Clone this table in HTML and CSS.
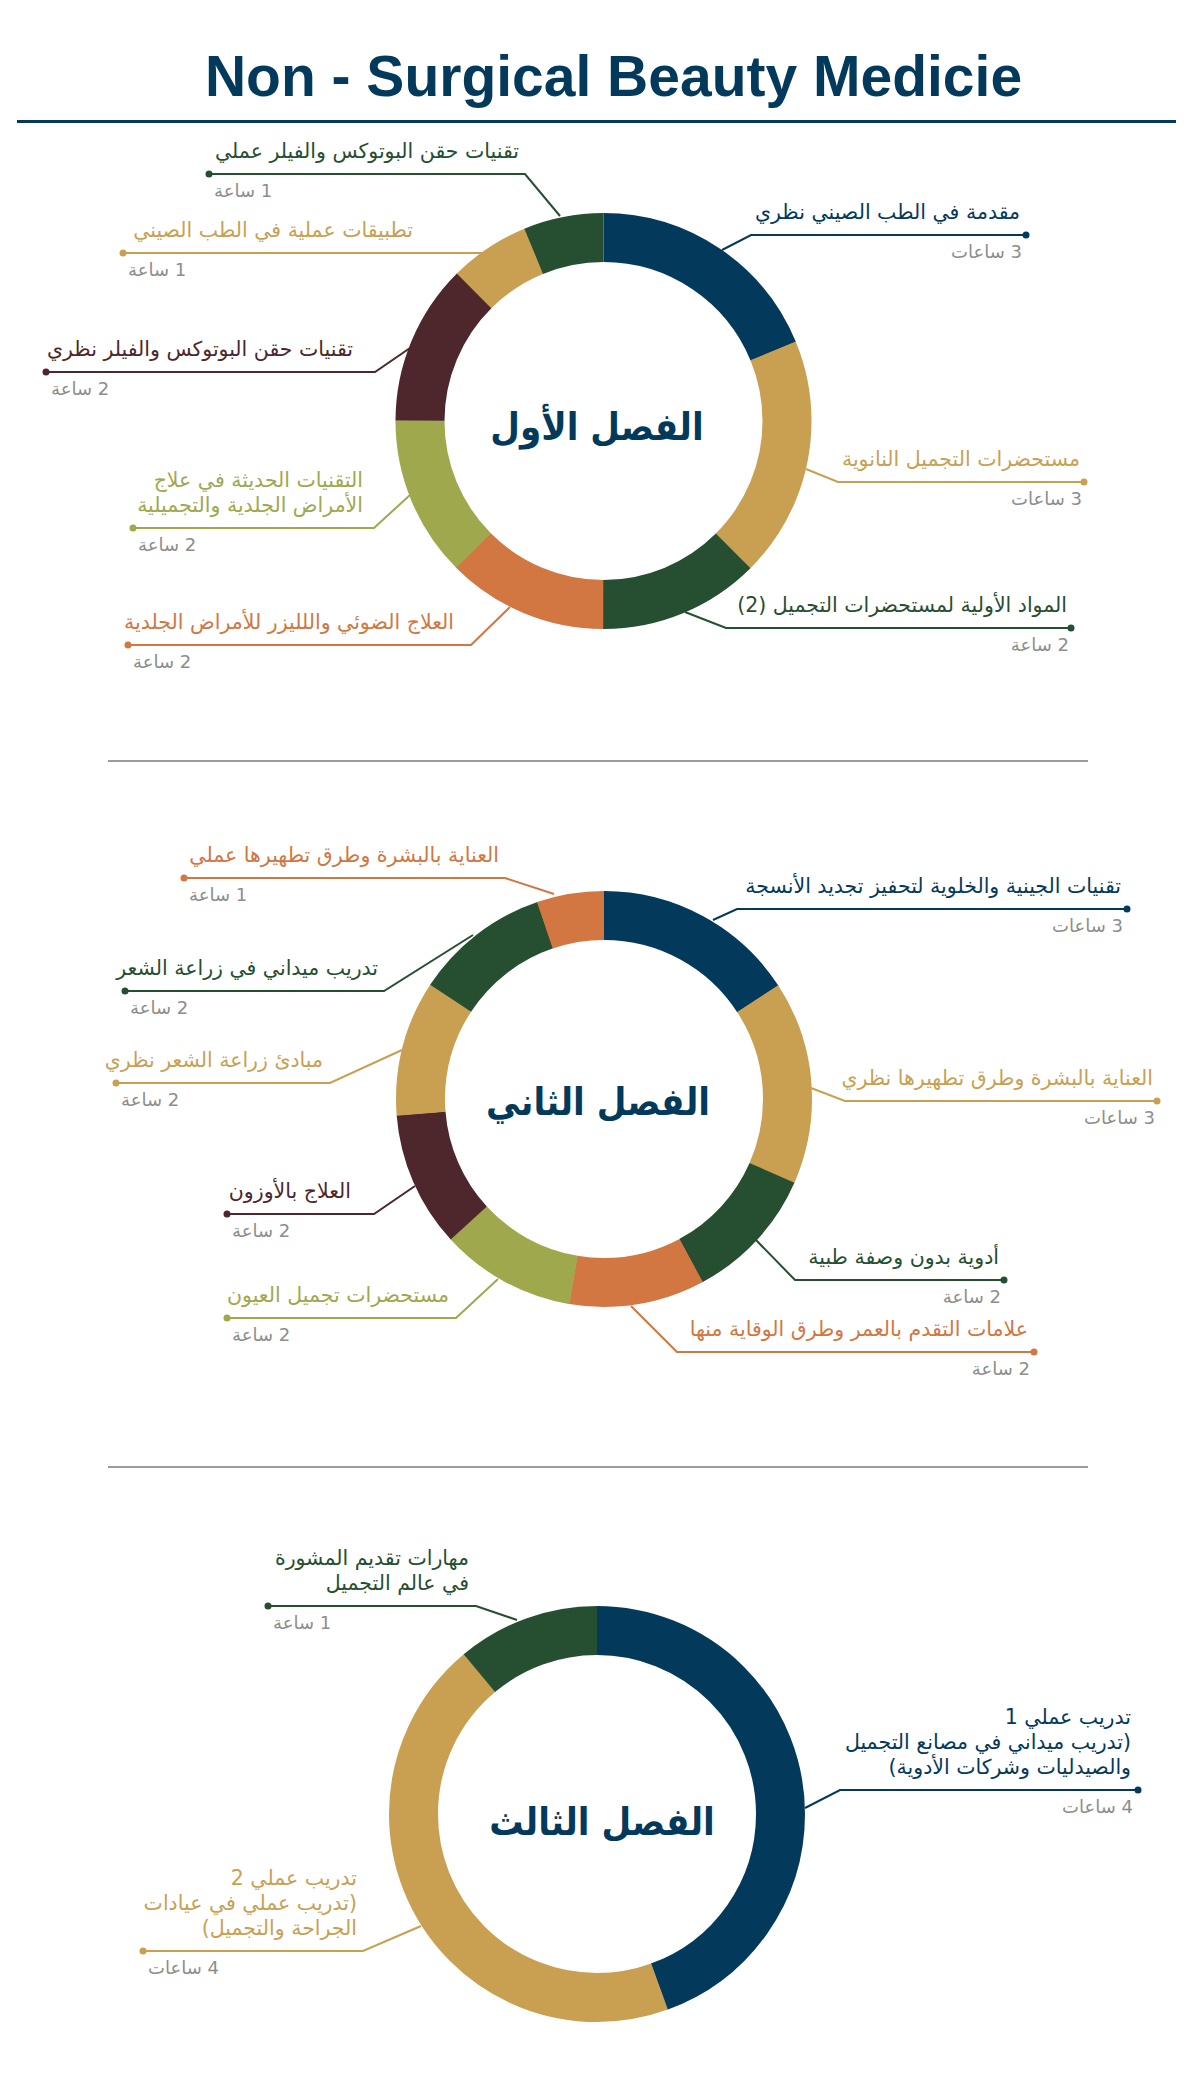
FILE: index.html
```html
<!DOCTYPE html>
<html lang="ar">
<head>
<meta charset="utf-8">
<title>Non - Surgical Beauty Medicie</title>
<link rel="stylesheet" href="styles.css">
</head>
<body>
<main class="page">
  <header class="head">
    <h1 class="title">Non - Surgical Beauty Medicie</h1>
  </header>

  <section class="chart">
    <svg class="canvas" width="1200" height="637" viewBox="0 0 1200 637">
      <g class="ring" transform="rotate(-90 603.5 298)">
        <circle cx="603.5" cy="298" r="183.5" stroke="#033a5c" stroke-dasharray="216.7 936.3" stroke-dashoffset="0"/>
        <circle cx="603.5" cy="298" r="183.5" stroke="#c9a051" stroke-dasharray="216.7 936.3" stroke-dashoffset="-216.18"/>
        <circle cx="603.5" cy="298" r="183.5" stroke="#264e30" stroke-dasharray="144.6 1008.4" stroke-dashoffset="-432.36"/>
        <circle cx="603.5" cy="298" r="183.5" stroke="#d27642" stroke-dasharray="144.6 1008.4" stroke-dashoffset="-576.48"/>
        <circle cx="603.5" cy="298" r="183.5" stroke="#a0a84d" stroke-dasharray="144.6 1008.4" stroke-dashoffset="-720.60"/>
        <circle cx="603.5" cy="298" r="183.5" stroke="#4d272b" stroke-dasharray="144.6 1008.4" stroke-dashoffset="-864.72"/>
        <circle cx="603.5" cy="298" r="183.5" stroke="#c9a051" stroke-dasharray="72.6 1080.4" stroke-dashoffset="-1008.84"/>
        <circle cx="603.5" cy="298" r="183.5" stroke="#264e30" stroke-dasharray="72.1 1080.9" stroke-dashoffset="-1080.90"/>
      </g>
      <g class="leads">
        <polyline stroke="#033a5c" points="722,127 751,112 1026,112"/><circle class="dot" fill="#033a5c" cx="1026" cy="112" r="3.5"/>
        <polyline stroke="#c9a051" points="806,346 838,359 1084,359"/><circle class="dot" fill="#c9a051" cx="1084" cy="359" r="3.5"/>
        <polyline stroke="#264e30" points="685,489 726,505 1071,505"/><circle class="dot" fill="#264e30" cx="1071" cy="505" r="3.5"/>
        <polyline stroke="#264e30" points="560,93 525,51 209,51"/><circle class="dot" fill="#264e30" cx="209" cy="51" r="3.5"/>
        <polyline stroke="#c9a051" points="483,130 123,130"/><circle class="dot" fill="#c9a051" cx="123" cy="130" r="3.5"/>
        <polyline stroke="#4d272b" points="410,225 375,249 46,249"/><circle class="dot" fill="#4d272b" cx="46" cy="249" r="3.5"/>
        <polyline stroke="#a0a84d" points="410,372 374,405 133,405"/><circle class="dot" fill="#a0a84d" cx="133" cy="405" r="3.5"/>
        <polyline stroke="#d27642" points="510,484 471,522 128,522"/><circle class="dot" fill="#d27642" cx="128" cy="522" r="3.5"/>
      </g>
    </svg>
    <h2 class="chapter ch1">الفصل الأول</h2>

    <div class="lbl right c1r1"><p class="t navy">مقدمة في الطب الصيني نظري</p><p class="h">3 ساعات</p></div>
    <div class="lbl right c1r2"><p class="t gold">مستحضرات التجميل النانوية</p><p class="h">3 ساعات</p></div>
    <div class="lbl right c1r3"><p class="t green">المواد الأولية لمستحضرات التجميل (2)</p><p class="h">2 ساعة</p></div>
    <div class="lbl left c1l1"><p class="t green">تقنيات حقن البوتوكس والفيلر عملي</p><p class="h">1 ساعة</p></div>
    <div class="lbl left c1l2"><p class="t gold">تطبيقات عملية في الطب الصيني</p><p class="h">1 ساعة</p></div>
    <div class="lbl left c1l3"><p class="t maroon">تقنيات حقن البوتوكس والفيلر نظري</p><p class="h">2 ساعة</p></div>
    <div class="lbl left c1l4"><p class="t olive">التقنيات الحديثة في علاج<br>الأمراض الجلدية والتجميلية</p><p class="h">2 ساعة</p></div>
    <div class="lbl left c1l5"><p class="t orange">العلاج الضوئي واللليزر للأمراض الجلدية</p><p class="h">2 ساعة</p></div>
  </section>

  <hr class="divider">

  <section class="chart">
    <svg class="canvas" width="1200" height="704" viewBox="0 0 1200 704">
      <g class="ring" transform="rotate(-90 604 337)">
        <circle cx="604" cy="337" r="183.5" stroke="#033a5c" stroke-dasharray="182.5 970.5" stroke-dashoffset="0"/>
        <circle cx="604" cy="337" r="183.5" stroke="#c9a051" stroke-dasharray="182.5 970.5" stroke-dashoffset="-182.05"/>
        <circle cx="604" cy="337" r="183.5" stroke="#264e30" stroke-dasharray="121.8 1031.2" stroke-dashoffset="-364.10"/>
        <circle cx="604" cy="337" r="183.5" stroke="#d27642" stroke-dasharray="121.8 1031.2" stroke-dashoffset="-485.46"/>
        <circle cx="604" cy="337" r="183.5" stroke="#a0a84d" stroke-dasharray="121.8 1031.2" stroke-dashoffset="-606.82"/>
        <circle cx="604" cy="337" r="183.5" stroke="#4d272b" stroke-dasharray="121.8 1031.2" stroke-dashoffset="-728.19"/>
        <circle cx="604" cy="337" r="183.5" stroke="#c9a051" stroke-dasharray="121.8 1031.2" stroke-dashoffset="-849.55"/>
        <circle cx="604" cy="337" r="183.5" stroke="#264e30" stroke-dasharray="121.8 1031.2" stroke-dashoffset="-970.92"/>
        <circle cx="604" cy="337" r="183.5" stroke="#d27642" stroke-dasharray="60.7 1092.3" stroke-dashoffset="-1092.28"/>
      </g>
      <g class="leads">
        <polyline stroke="#033a5c" points="713,158 737,147 1127,147"/><circle class="dot" fill="#033a5c" cx="1127" cy="147" r="3.5"/>
        <polyline stroke="#c9a051" points="811,326 845,339 1157,339"/><circle class="dot" fill="#c9a051" cx="1157" cy="339" r="3.5"/>
        <polyline stroke="#264e30" points="756,478 795,518 1004,518"/><circle class="dot" fill="#264e30" cx="1004" cy="518" r="3.5"/>
        <polyline stroke="#d27642" points="631,544 677,590 1034,590"/><circle class="dot" fill="#d27642" cx="1034" cy="590" r="3.5"/>
        <polyline stroke="#d27642" points="554,132 505,116 184,116"/><circle class="dot" fill="#d27642" cx="184" cy="116" r="3.5"/>
        <polyline stroke="#264e30" points="473,173 384,229 125,229"/><circle class="dot" fill="#264e30" cx="125" cy="229" r="3.5"/>
        <polyline stroke="#c9a051" points="402,288 330,321 116,321"/><circle class="dot" fill="#c9a051" cx="116" cy="321" r="3.5"/>
        <polyline stroke="#4d272b" points="415,424 374,452 227,452"/><circle class="dot" fill="#4d272b" cx="227" cy="452" r="3.5"/>
        <polyline stroke="#a0a84d" points="498,517 456,556 227,556"/><circle class="dot" fill="#a0a84d" cx="227" cy="556" r="3.5"/>
      </g>
    </svg>
    <h2 class="chapter ch2">الفصل الثاني</h2>

    <div class="lbl right c2r1"><p class="t navy">تقنيات الجينية والخلوية لتحفيز تجديد الأنسجة</p><p class="h">3 ساعات</p></div>
    <div class="lbl right c2r2"><p class="t gold">العناية بالبشرة وطرق تطهيرها نظري</p><p class="h">3 ساعات</p></div>
    <div class="lbl right c2r3"><p class="t green">أدوية بدون وصفة طبية</p><p class="h">2 ساعة</p></div>
    <div class="lbl right c2r4"><p class="t orange">علامات التقدم بالعمر وطرق الوقاية منها</p><p class="h">2 ساعة</p></div>
    <div class="lbl left c2l1"><p class="t orange">العناية بالبشرة وطرق تطهيرها عملي</p><p class="h">1 ساعة</p></div>
    <div class="lbl left c2l2"><p class="t green">تدريب ميداني في زراعة الشعر</p><p class="h">2 ساعة</p></div>
    <div class="lbl left c2l3"><p class="t gold">مبادئ زراعة الشعر نظري</p><p class="h">2 ساعة</p></div>
    <div class="lbl left c2l4"><p class="t maroon">العلاج بالأوزون</p><p class="h">2 ساعة</p></div>
    <div class="lbl left c2l5"><p class="t olive">مستحضرات تجميل العيون</p><p class="h">2 ساعة</p></div>
  </section>

  <hr class="divider">

  <section class="chart">
    <svg class="canvas" width="1200" height="619" viewBox="0 0 1200 619">
      <g class="ring" transform="rotate(-90 597 346)">
        <circle cx="597" cy="346" r="183.5" stroke="#033a5c" stroke-dasharray="512.9 640.1" stroke-dashoffset="0"/>
        <circle cx="597" cy="346" r="183.5" stroke="#c9a051" stroke-dasharray="512.9 640.1" stroke-dashoffset="-512.43"/>
        <circle cx="597" cy="346" r="183.5" stroke="#264e30" stroke-dasharray="128.2 1024.8" stroke-dashoffset="-1024.86"/>
      </g>
      <g class="leads">
        <polyline stroke="#033a5c" points="805,340 840,322 1138,322"/><circle class="dot" fill="#033a5c" cx="1138" cy="322" r="3.5"/>
        <polyline stroke="#264e30" points="517,152 476,138 268,138"/><circle class="dot" fill="#264e30" cx="268" cy="138" r="3.5"/>
        <polyline stroke="#c9a051" points="421,458 363,483 143,483"/><circle class="dot" fill="#c9a051" cx="143" cy="483" r="3.5"/>
      </g>
    </svg>
    <h2 class="chapter ch3">الفصل الثالث</h2>

    <div class="lbl right c3r1"><p class="t navy">تدريب عملي 1<br>(تدريب ميداني في مصانع التجميل<br>والصيدليات وشركات الأدوية)</p><p class="h">4 ساعات</p></div>
    <div class="lbl left c3l1"><p class="t green">مهارات تقديم المشورة<br>في عالم التجميل</p><p class="h">1 ساعة</p></div>
    <div class="lbl left c3l2"><p class="t gold">تدريب عملي 2<br>(تدريب عملي في عيادات<br>الجراحة والتجميل)</p><p class="h">4 ساعات</p></div>
  </section>
</main>
</body>
</html>
```

FILE: styles.css
```css
* { box-sizing: border-box; margin: 0; padding: 0; }

body {
  margin: 0;
  background: #ffffff;
  font-family: "DejaVu Sans", sans-serif;
}

.page { width: 1200px; }

.head {
  height: 123px;
  margin: 0 24px 0 17px;
  padding-top: 44px;
  border-bottom: 3px solid #033a5c;
}

.title {
  font-family: "Liberation Sans", Arial, sans-serif;
  font-weight: 700;
  font-size: 57px;
  line-height: 64px;
  color: #033a5c;
  text-align: center;
  padding-left: 34px;
}

.chart { position: relative; }
.canvas { display: block; }

.ring circle { fill: none; stroke-width: 49; }
.leads polyline { fill: none; stroke-width: 2; stroke-linejoin: miter; }

.divider {
  height: 0;
  border: 0;
  border-top: 2px solid #9b9b9b;
  margin: 0 112px 0 108px;
}

.chapter {
  position: absolute;
  transform: translate(-50%, -50%);
  font-family: "DejaVu Sans Condensed", "DejaVu Sans", sans-serif;
  font-weight: 700;
  font-size: 38px;
  line-height: 1;
  color: #033a5c;
  white-space: nowrap;
  direction: rtl;
}
.ch1 { left: 597px; top: 304px; }
.ch2 { left: 598px; top: 340px; }
.ch3 { left: 602px; top: 354px; }

.lbl { position: absolute; height: 0; }
.lbl .t {
  position: absolute;
  right: 0;
  bottom: 10px;
  white-space: nowrap;
  direction: rtl;
  text-align: right;
  font-size: 20.5px;
  line-height: 25px;
}
.lbl .h {
  position: absolute;
  top: 6px;
  white-space: nowrap;
  direction: rtl;
  font-size: 18px;
  line-height: 21px;
  color: #8d8d8d;
}
.lbl.left .h { left: 5px; }
.lbl.right .h { right: -2px; }

.navy { color: #033a5c; }
.gold { color: #c9a051; }
.green { color: #264e30; }
.maroon { color: #4d272b; }
.olive { color: #a0a84d; }
.orange { color: #d27642; }

/* chart 1 */
.c1r1 { left: 751px; top: 112px; width: 269px; }
.c1r2 { left: 838px; top: 359px; width: 242px; }
.c1r3 { left: 726px; top: 505px; width: 341px; }
.c1l1 { left: 209px; top: 51px;  width: 310px; }
.c1l2 { left: 123px; top: 130px; width: 290px; }
.c1l3 { left: 46px;  top: 249px; width: 307px; }
.c1l4 { left: 133px; top: 405px; width: 230px; }
.c1l5 { left: 128px; top: 522px; width: 326px; }

/* chart 2 */
.c2r1 { left: 737px; top: 147px; width: 384px; }
.c2r2 { left: 845px; top: 339px; width: 308px; }
.c2r3 { left: 795px; top: 518px; width: 204px; }
.c2r4 { left: 677px; top: 590px; width: 351px; }
.c2l1 { left: 184px; top: 116px; width: 315px; }
.c2l2 { left: 125px; top: 229px; width: 253px; }
.c2l3 { left: 116px; top: 321px; width: 207px; }
.c2l4 { left: 227px; top: 452px; width: 124px; }
.c2l5 { left: 227px; top: 556px; width: 222px; }

/* chart 3 */
.c3r1 { left: 840px; top: 322px; width: 291px; }
.c3l1 { left: 268px; top: 138px; width: 201px; }
.c3l2 { left: 143px; top: 483px; width: 214px; }
```
